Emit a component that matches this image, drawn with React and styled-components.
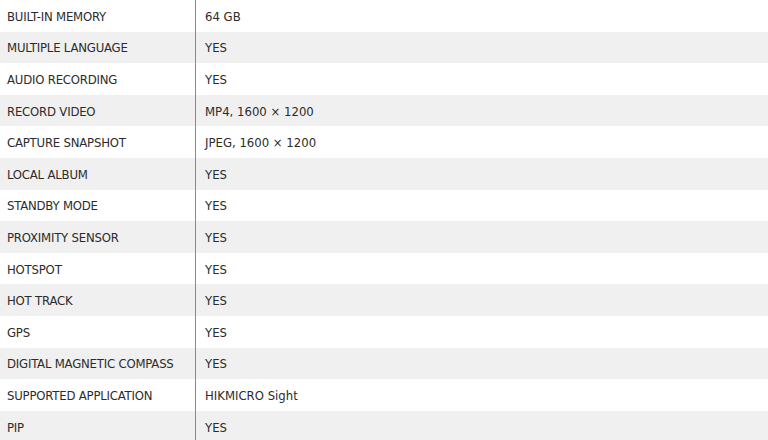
import React from 'react';
import styled, { createGlobalStyle } from 'styled-components';

const GlobalStyle = createGlobalStyle`
  html, body {
    margin: 0;
    padding: 0;
    background: #fff;
  }
  body {
    font-family: "DejaVu Sans Condensed", "Liberation Sans", sans-serif;
  }
`;

const SpecTable = styled.div`
  width: 768px;
  display: grid;
  grid-template-columns: 195px 1fr;
  grid-auto-rows: 31.6px;
`;

const Cell = styled.div`
  display: flex;
  align-items: center;
  padding-top: 1px;
  font-size: 13px;
  letter-spacing: ${props => props.value ? '0' : '-0.2px'};
  color: #2b2b2b;
  background-color: ${props => props.shaded ? '#f0f0f0' : '#fff'};
  padding-left: ${props => props.value ? '9px' : '7px'};
  ${props => props.value && 'border-left: 1.5px solid #8a8a8a;'}
  white-space: nowrap;
`;

const specs = [
  ['BUILT-IN MEMORY', '64 GB'],
  ['MULTIPLE LANGUAGE', 'YES'],
  ['AUDIO RECORDING', 'YES'],
  ['RECORD VIDEO', 'MP4, 1600 × 1200'],
  ['CAPTURE SNAPSHOT', 'JPEG, 1600 × 1200'],
  ['LOCAL ALBUM', 'YES'],
  ['STANDBY MODE', 'YES'],
  ['PROXIMITY SENSOR', 'YES'],
  ['HOTSPOT', 'YES'],
  ['HOT TRACK', 'YES'],
  ['GPS', 'YES'],
  ['DIGITAL MAGNETIC COMPASS', 'YES'],
  ['SUPPORTED APPLICATION', 'HIKMICRO Sight'],
  ['PIP', 'YES'],
];

const App = () => {
  return (
    <>
      <GlobalStyle />
      <SpecTable>
        {specs.map(([label, val], i) => (
          <React.Fragment key={label}>
            <Cell shaded={i % 2 === 1}>{label}</Cell>
            <Cell value shaded={i % 2 === 1}>{val}</Cell>
          </React.Fragment>
        ))}
      </SpecTable>
    </>
  );
};

export default App;
